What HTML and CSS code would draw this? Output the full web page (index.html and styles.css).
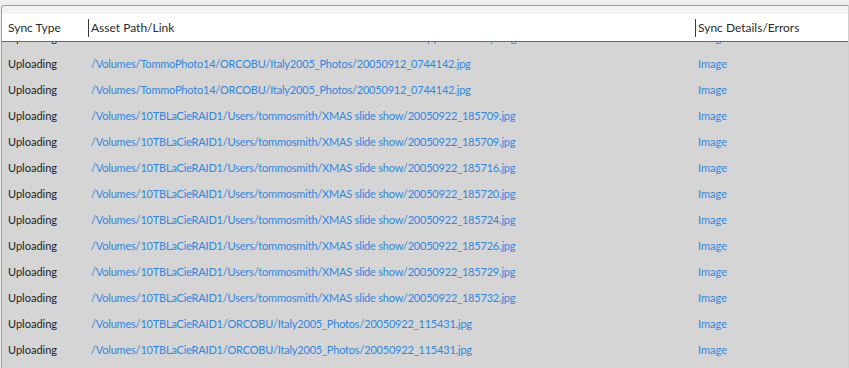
FILE: index.html
```html
<!DOCTYPE html>
<html>
<head>
<meta charset="utf-8">
<link rel="stylesheet" href="styles.css">
</head>
<body>
<div class="panel">
  <div class="band"></div>
  <div class="head">
    <div class="hc first">Sync Type</div>
    <div class="hc sep">Asset Path/Link</div>
    <div class="hc sep">Sync Details/Errors</div>
  </div>
  <div class="body">
    <div class="row partial"><div class="c1">Uploading</div><div class="c2"><a>/Volumes/10TBLaCieRAID1/Users/tommosmith/Pictures/Photos Library.photoslibrary/originals/0/0A1B2C3D-4E5F-6789-ABCD-0123456789AB_1_105_c.jpg</a></div><div class="c3"><a>Image</a></div></div>
    <div class="row"><div class="c1">Uploading</div><div class="c2"><a>/Volumes/TommoPhoto14/ORCOBU/Italy2005_Photos/20050912_0744142.jpg</a></div><div class="c3"><a>Image</a></div></div>
    <div class="row"><div class="c1">Uploading</div><div class="c2"><a>/Volumes/TommoPhoto14/ORCOBU/Italy2005_Photos/20050912_0744142.jpg</a></div><div class="c3"><a>Image</a></div></div>
    <div class="row"><div class="c1">Uploading</div><div class="c2"><a>/Volumes/10TBLaCieRAID1/Users/tommosmith/XMAS slide show/20050922_185709.jpg</a></div><div class="c3"><a>Image</a></div></div>
    <div class="row"><div class="c1">Uploading</div><div class="c2"><a>/Volumes/10TBLaCieRAID1/Users/tommosmith/XMAS slide show/20050922_185709.jpg</a></div><div class="c3"><a>Image</a></div></div>
    <div class="row"><div class="c1">Uploading</div><div class="c2"><a>/Volumes/10TBLaCieRAID1/Users/tommosmith/XMAS slide show/20050922_185716.jpg</a></div><div class="c3"><a>Image</a></div></div>
    <div class="row"><div class="c1">Uploading</div><div class="c2"><a>/Volumes/10TBLaCieRAID1/Users/tommosmith/XMAS slide show/20050922_185720.jpg</a></div><div class="c3"><a>Image</a></div></div>
    <div class="row"><div class="c1">Uploading</div><div class="c2"><a>/Volumes/10TBLaCieRAID1/Users/tommosmith/XMAS slide show/20050922_185724.jpg</a></div><div class="c3"><a>Image</a></div></div>
    <div class="row"><div class="c1">Uploading</div><div class="c2"><a>/Volumes/10TBLaCieRAID1/Users/tommosmith/XMAS slide show/20050922_185726.jpg</a></div><div class="c3"><a>Image</a></div></div>
    <div class="row"><div class="c1">Uploading</div><div class="c2"><a>/Volumes/10TBLaCieRAID1/Users/tommosmith/XMAS slide show/20050922_185729.jpg</a></div><div class="c3"><a>Image</a></div></div>
    <div class="row"><div class="c1">Uploading</div><div class="c2"><a>/Volumes/10TBLaCieRAID1/Users/tommosmith/XMAS slide show/20050922_185732.jpg</a></div><div class="c3"><a>Image</a></div></div>
    <div class="row"><div class="c1">Uploading</div><div class="c2"><a>/Volumes/10TBLaCieRAID1/ORCOBU/Italy2005_Photos/20050922_115431.jpg</a></div><div class="c3"><a>Image</a></div></div>
    <div class="row"><div class="c1">Uploading</div><div class="c2"><a>/Volumes/10TBLaCieRAID1/ORCOBU/Italy2005_Photos/20050922_115431.jpg</a></div><div class="c3"><a>Image</a></div></div>
  </div>
</div>
</body>
</html>
```

FILE: styles.css
```css
html, body {
  margin: 0;
  padding: 0;
  height: 100%;
  overflow: hidden;
}
body {
  background: #eeeeee;
  font-family: Lato, "Open Sans", sans-serif;
  font-size: 11px;
  color: #222222;
  padding-top: 5px;
  box-sizing: border-box;
}
.panel {
  margin-left: 1px;
  height: 363px;
  border: 1px solid #9c9c9c;
  border-right-color: #cfcfcf;
  border-bottom: none;
  border-top-left-radius: 4px;
  background: #d5d5d5;
  overflow: hidden;
  box-sizing: border-box;
}
.band {
  height: 8px;
  background: #f3f3f3;
}
.head {
  display: grid;
  grid-template-columns: 86px 607px 1fr;
  height: 27px;
  background: #ffffff;
  border-bottom: 1px solid #6b6b6b;
  align-items: center;
  font-size: 12px;
  color: #2a2a2a;
}
.hc.first {
  padding-left: 6px;
}
.hc.sep {
  border-left: 1px solid #3a3a3a;
  padding-left: 2px;
  line-height: 18px;
}
.body {
  overflow: hidden;
}
.row {
  display: grid;
  grid-template-columns: 86px 607px 1fr;
  height: 26px;
  align-items: center;
  white-space: nowrap;
}
.row.partial {
  margin-top: -18px;
}
.c1 {
  padding-left: 6px;
}
.c2 {
  padding-left: 3px;
  overflow: hidden;
  letter-spacing: -0.2px;
}
.c3 {
  padding-left: 3px;
}
a {
  color: #2f87e0;
  text-decoration: none;
}
```
